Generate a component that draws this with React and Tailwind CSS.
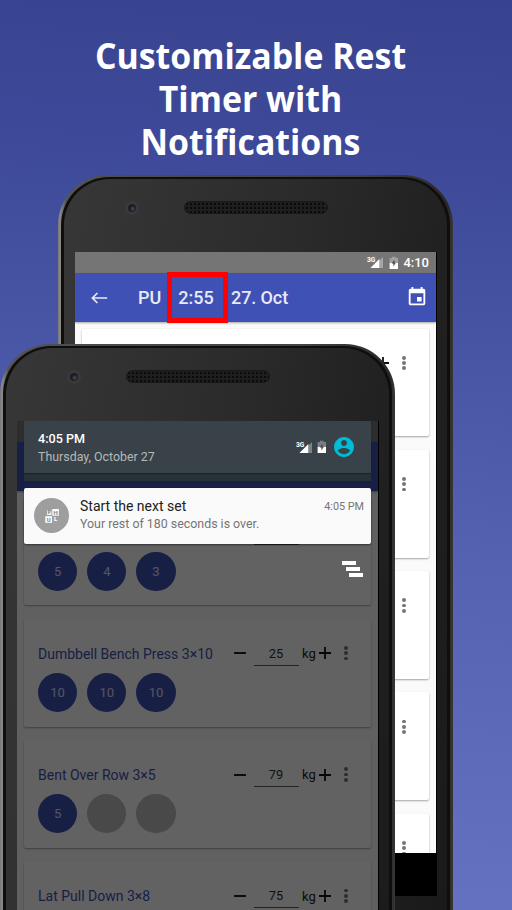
import React from "react";

const ROBOTO = "font-['Roboto','Liberation_Sans',sans-serif]";

function SignalIcon() {
  return (
    <svg className="h-[15px] w-[17px] shrink-0 overflow-visible" viewBox="0 0 17 15">
      <path d="M16 2 L16 13 L12.4 13 L12.4 5.6 Z" fill="#fff" fillOpacity="0.35" />
      <path d="M3.4 13 L12.4 4 L12.4 13 Z" fill="#fff" />
      <text
        x="0"
        y="6.6"
        fontSize="8"
        fontWeight="700"
        fill="#fff"
        fontFamily="Roboto, sans-serif"
        textLength="8.4"
        lengthAdjust="spacingAndGlyphs"
      >
        3G
      </text>
    </svg>
  );
}

function BatteryIcon() {
  return (
    <svg className="h-[14px] w-[10px] shrink-0" viewBox="0 0 10 14">
      <path d="M3 0.8 H6.6 V2 H9 V6.8 H0.6 V2 H3 Z" fill="#fff" fillOpacity="0.32" />
      <path d="M0.6 6.8 H9 V13 H0.6 Z" fill="#fff" />
      <path d="M5.4 3.6 L2.6 7.6 H4.4 V10.6 L7 6.4 H5.4 Z" fill="#4c4c4c" />
    </svg>
  );
}

function CalendarIcon() {
  return (
    <svg className="h-[22px] w-[22px]" viewBox="0 0 24 24" fill="#fff">
      <path d="M17 12h-5v5h5v-5zM16 1v2H8V1H6v2H5c-1.11 0-1.99.9-1.99 2L3 19c0 1.1.89 2 2 2h14c1.1 0 2-.9 2-2V5c0-1.1-.9-2-2-2h-1V1h-2zm3 18H5V8h14v11z" />
    </svg>
  );
}

function BackIcon() {
  return (
    <svg className="h-[12px] w-[17px]" viewBox="0 0 17 12" fill="none" stroke="#e8eaf6" strokeWidth="1.7">
      <path d="M16.2 6 H1.6 M6.4 1 L1.4 6 L6.4 11" />
    </svg>
  );
}

function AccountIcon() {
  return (
    <svg className="h-[24px] w-[24px]" viewBox="0 0 24 24" fill="#00bcd4">
      <path d="M12 2C6.48 2 2 6.48 2 12s4.48 10 10 10 10-4.48 10-10S17.52 2 12 2zm0 3c1.66 0 3 1.34 3 3s-1.34 3-3 3-3-1.34-3-3 1.34-3 3-3zm0 14.2c-2.5 0-4.71-1.28-6-3.22.03-1.99 4-3.08 6-3.08 1.99 0 5.97 1.09 6 3.08-1.29 1.94-3.5 3.22-6 3.22z" />
    </svg>
  );
}

function AppBadge() {
  return (
    <div className="grid size-[35px] shrink-0 place-items-center rounded-full bg-[#9e9e9e]">
      <svg className="h-[14px] w-[14px]" viewBox="0 0 14 14" fontFamily="Roboto, sans-serif" fontWeight="900" fontSize="6">
        <rect x="2" y="1.4" width="4.4" height="4.6" fill="#fff" fillOpacity="0.85" />
        <rect x="7.3" y="0" width="6.5" height="6.7" fill="#fff" />
        <rect x="0.3" y="7.2" width="6.7" height="6.6" fill="#fff" />
        <text x="2.8" y="5.4" fontSize="4.6" fill="#808080">P</text>
        <text x="8.5" y="5.6" fill="#8e8e8e">H</text>
        <text x="1.7" y="12.6" fill="#8e8e8e">U</text>
        <text x="9" y="12.4" fill="#fff">L</text>
      </svg>
    </div>
  );
}

function ClearAllIcon() {
  return (
    <div className="flex flex-col gap-[2px]">
      <span className="h-[4px] w-[14px] bg-white" />
      <span className="ml-[3.5px] h-[4px] w-[14px] bg-white" />
      <span className="ml-[7px] h-[4px] w-[14px] bg-white" />
    </div>
  );
}

function Kebab() {
  return (
    <span className="flex flex-col gap-[1.6px]">
      <i className="size-[3.7px] rounded-full bg-[#757575]" />
      <i className="size-[3.7px] rounded-full bg-[#757575]" />
      <i className="size-[3.7px] rounded-full bg-[#757575]" />
    </span>
  );
}

function ExerciseCard({ name, weight, reps }) {
  return (
    <div className="h-[107.8px] shrink-0 rounded-[2px] bg-white pl-[14px] shadow-[0_1px_2px_rgba(0,0,0,0.35)]">
      <div className="flex h-[54px] items-center pt-[15px]">
        <span className="w-[196px] whitespace-nowrap pt-[2px] text-[14px] text-[#3f51b5]">{name}</span>
        <span className="h-[2px] w-[12px] bg-[#212121]" />
        <span className="ml-[8px] flex h-[25px] w-[45px] justify-center border-b border-[#5c5c5c] pr-px pt-[2px] text-[12.8px] leading-[21px] text-[#303030]">
          {weight}
        </span>
        <span className="ml-[3px] w-[14px] pt-[1px] text-[13px] text-[#212121]">{weight && "kg"}</span>
        <svg className="ml-[3px] h-[12px] w-[12px]" viewBox="0 0 12 12" stroke="#111" strokeWidth="1.8">
          <path d="M6 0 V12 M0 6 H12" />
        </svg>
        <span className="ml-[13px]">
          <Kebab />
        </span>
      </div>
      <div className="flex gap-[10px]">
        {reps.map((r, i) => (
          <span
            key={i}
            className={`grid size-[39.2px] place-items-center rounded-full pt-[1px] text-[13px] text-white/80 ${
              r ? "bg-[#3f51b5]" : "bg-[#bdbdbd]"
            }`}
          >
            {r}
          </span>
        ))}
      </div>
    </div>
  );
}

const workout = [
  { name: "", weight: "", reps: ["5", "4", "3"] },
  { name: "Dumbbell Bench Press 3×10", weight: "25", reps: ["10", "10", "10"] },
  { name: "Bent Over Row 3×5", weight: "79", reps: ["5", "", ""] },
  { name: "Lat Pull Down 3×8", weight: "75", reps: [] },
];

const blankWorkout = Array.from({ length: 5 }, () => ({ name: "", weight: "", reps: [] }));

function StatusBar() {
  return (
    <>
      <SignalIcon />
      <span className="ml-[5px] flex">
        <BatteryIcon />
      </span>
      <span className="ml-[4.5px] text-[13px] font-medium">4:10</span>
    </>
  );
}

function ToolbarContent() {
  return (
    <>
      <BackIcon />
      <span className="ml-[30px] w-[29px]">PU</span>
      <span className="grid h-[51px] w-[61px] shrink-0 place-items-center border-[5px] border-[#ff0000] pr-[3px]">2:55</span>
      <span className="ml-[3px] whitespace-nowrap tracking-[-0.1px]">27. Oct</span>
      <span className="ml-auto pb-[2px]">
        <CalendarIcon />
      </span>
    </>
  );
}

function AppScreen({ exercises, status, toolbar }) {
  return (
    <div className={`isolate flex h-[601px] flex-col overflow-hidden bg-[#fafafa] ${ROBOTO}`}>
      <div className="flex h-[21px] shrink-0 items-center justify-end bg-[#757575] pr-[7px] text-white">{status}</div>
      <div className="z-10 flex h-[49px] shrink-0 items-center bg-[#3f51b5] pl-[16px] pr-[8px] text-[18px] font-medium text-[#e8eaf6] shadow-[0_1px_2px_rgba(0,0,0,0.35)]">
        {toolbar}
      </div>
      <div className="flex flex-col gap-[13.5px] px-[7px] pt-[6.5px]">
        {exercises.map((w, i) => (
          <ExerciseCard key={i} {...w} />
        ))}
      </div>
    </div>
  );
}

function NotificationShade() {
  return (
    <div className={`absolute inset-0 bg-black/[0.615] px-[7px] ${ROBOTO}`}>
      <div className="flex h-[60px] flex-col bg-[#263238]">
        <div className="flex h-[52px] items-center justify-between bg-[#384248] pl-[14px] pr-[15px] shadow-[0_1px_1px_rgba(0,0,0,0.25)]">
          <div className="pt-[1px]">
            <p className="text-[12.6px] font-medium leading-[18px] text-white">4:05 PM</p>
            <p className="text-[12.4px] leading-[18px] text-[#b4b9bb]">Thursday, October 27</p>
          </div>
          <div className="flex items-center">
            <SignalIcon />
            <span className="ml-[4.5px] flex">
              <BatteryIcon />
            </span>
            <span className="ml-[5px]">
              <AccountIcon />
            </span>
          </div>
        </div>
      </div>
      <div className="mt-[6.5px] flex h-[56.5px] items-center rounded-[2px] bg-[#fafafa] pl-[10px] pr-[7px] shadow-[0_1px_2px_rgba(0,0,0,0.5)]">
        <AppBadge />
        <div className="ml-[11px] flex-1 pb-[1px]">
          <p className="flex h-[18px] items-center justify-between text-[14px] leading-[18px] text-[#212121]">
            Start the next set
            <span className="pt-[2px] text-[10.8px] text-[#757575]">4:05 PM</span>
          </p>
          <p className="text-[12.4px] leading-[18px] text-[#757575]">Your rest of 180 seconds is over.</p>
        </div>
      </div>
      <div className="flex justify-end pr-[8px] pt-[17px]">
        <ClearAllIcon />
      </div>
    </div>
  );
}

function Phone({ className, children }) {
  return (
    <div
      className={`absolute h-[800px] w-[395px] rounded-t-[50px] bg-[linear-gradient(90deg,#777_0px,#8a8a8a_2px,#555_8px,#4c4a4a_80px,#444_300px,#2c282a_390px,#3a3638_395px)] px-[3px] pt-[2px] ${className}`}
    >
      <div className="h-full rounded-t-[48px] bg-[#0e0e0e] px-[3px] pt-[2px]">
        <div className="h-full rounded-t-[46px] bg-[linear-gradient(100deg,#373737_0%,#2b2b2b_45%,#1f1f1f_80%,#191919_100%)] px-[11px]">
          <div className="flex h-[73px] items-start pl-[50px]">
            <span className="mt-[22px] grid size-[14px] place-items-center rounded-full bg-[#3a3a3b]">
              <i className="size-[8px] rounded-full bg-[radial-gradient(circle_at_60%_60%,#5a4a58_0px,#1d1b26_3px)]" />
            </span>
            <span className="ml-[45px] mt-[22px] h-[13px] w-[144px] rounded-full border border-[#181818] bg-[#1e1e1e] bg-[radial-gradient(circle,#0b0b0b_1px,transparent_1.5px)] bg-[length:4px_4px]" />
          </div>
          <div className="relative w-[362px] border-r border-black">{children}</div>
        </div>
      </div>
    </div>
  );
}

export default function App() {
  return (
    <div className="relative h-[910px] w-[512px] overflow-hidden bg-[linear-gradient(184deg,#38438f_0%,#3f4b9b_22%,#5562b2_60%,#6673c3_100%)]">
      <h1 className="w-[501px] scale-x-[0.94] pt-[34px] text-center font-['Open_Sans','Noto_Sans',sans-serif] text-[36px] font-bold leading-[43px] text-white">
        <span className="block">Customizable Rest</span>
        <span className="block">Timer with</span>
        <span className="block">Notifications</span>
      </h1>
      <Phone className="left-[58px] top-[175px]">
        <AppScreen exercises={blankWorkout} status={<StatusBar />} toolbar={<ToolbarContent />} />
        <div className="h-[43px] bg-black" />
      </Phone>
      <Phone className="left-0 top-[344px]">
        <AppScreen exercises={workout} />
        <NotificationShade />
      </Phone>
    </div>
  );
}
